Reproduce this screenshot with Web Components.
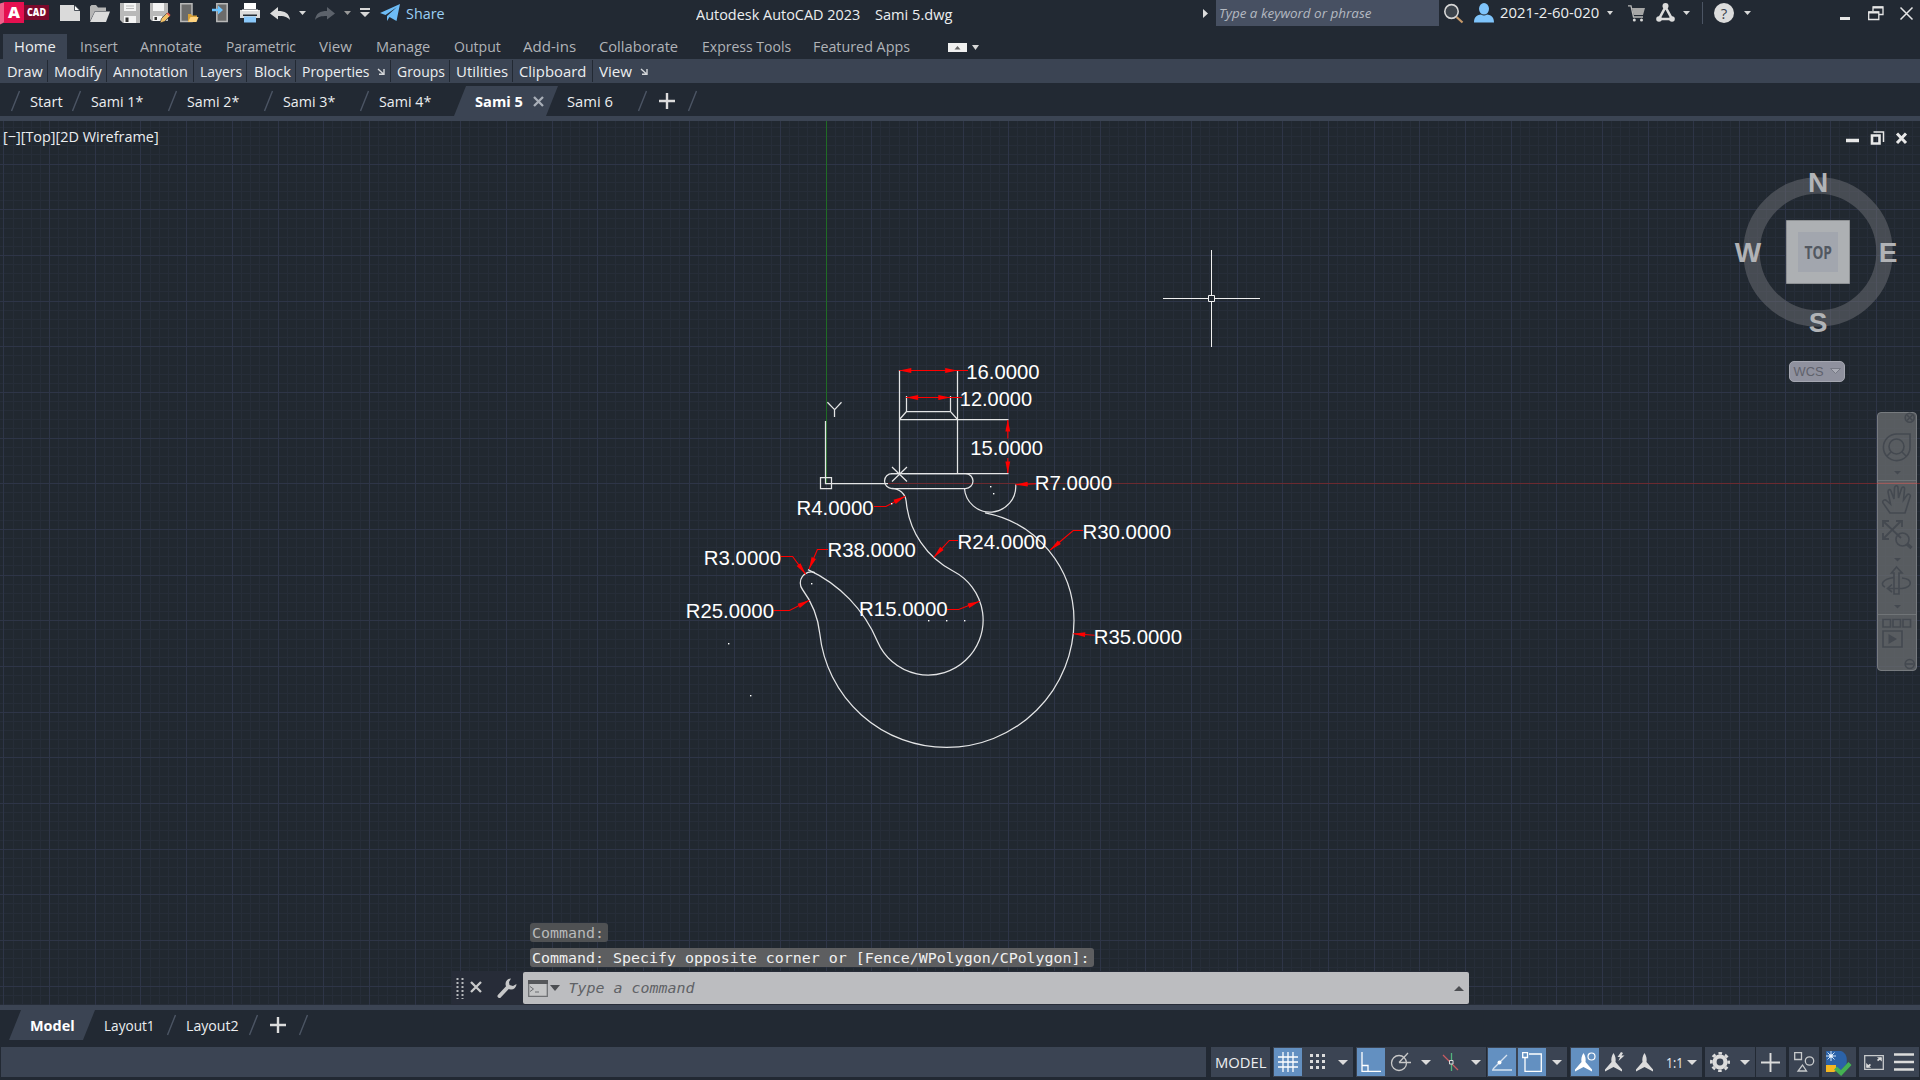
<!DOCTYPE html>
<html lang="en">
<head>
<meta charset="utf-8">
<title>Autodesk AutoCAD 2023 - Sami 5.dwg</title>
<style>
html,body{margin:0;padding:0;background:#222933}
body{width:1920px;height:1080px;overflow:hidden;font-family:"Open Sans",sans-serif}
</style>
</head>
<body>
<cad-app></cad-app>
<script>
const define = (name, css, html, after) => {
  const tpl = document.createElement('template');
  tpl.innerHTML = `<style>*{box-sizing:border-box}${css}</style>${html}`;
  customElements.define(name, class extends HTMLElement {
    connectedCallback() {
      if (this.shadowRoot) return;
      this.attachShadow({ mode: 'open' }).append(tpl.content.cloneNode(true));
      if (after) after(this, this.shadowRoot);
    }
  });
};

/* Text scaled horizontally to the width given in "w". */
define('fit-text',
  `:host{display:block;flex:none;white-space:pre;line-height:20px;height:20px;font-size:15px;color:#eceef0}
   span{display:inline-block;transform-origin:0 50%;margin-left:-.5px}`,
  `<span><slot></slot></span>`,
  (el, root) => {
    const w = +el.getAttribute('w'), s = root.querySelector('span');
    el.style.width = w + 'px';
    s.style.transform = `scaleX(${(w + 1.3) / s.offsetWidth})`;
  });

/* Lays items out left to right: each item is [start, width, markup]. */
const row = (items, from = 0) => {
  let at = from;
  return items.map(([x, w, html, style = '']) => {
    const m = x - at; at = x + w;
    return `<div class="i" style="margin-left:${m}px;width:${w}px;${style}">${html}</div>`;
  }).join('');
};
const ROW = `.i{flex:none;display:flex;align-items:center}svg{display:block;flex:none;overflow:visible}`;
const text = (t, w, st = '') => `<fit-text w="${w}" style="${st}">${t}</fit-text>`;
const svg = (w, h, body, st = '') => `<svg width="${w}" height="${h}" viewBox="0 0 ${w} ${h}" fill="none" style="${st}">${body}</svg>`;
const tri = (w = 7, h = 4, c = '#d8d8d8') => svg(w, h, `<path d="M0 0H${w}L${w / 2} ${h}Z" fill="${c}"/>`);
const slash = svg(9, 20, `<path d="M.5 20L8.5 0" stroke="#4c5564" stroke-width="1.4"/>`);
const plus = svg(16, 16, `<path d="M8 0V16M0 8H16" stroke="#dcdcdc" stroke-width="2.4"/>`);

/* ---------- title bar ---------- */
const I = {
  logo: svg(49, 26, `<path d="M22 5H49V20H22Z" fill="#7b0a2c"/><path d="M0 3.500L5 2V22L0 24.500Z" fill="#f0608b"/><path d="M4 2H24V23H4Z" fill="#e51050"/>
    <text x="8" y="18.200" font-family="Open Sans" font-weight="800" font-size="16.500" fill="#fff" textLength="12" lengthAdjust="spacingAndGlyphs">A</text>
    <text x="27" y="16" font-family="Open Sans" font-weight="800" font-size="10" fill="#fff" textLength="19" lengthAdjust="spacingAndGlyphs">CAD</text>`),
  new: svg(20, 16, `<path d="M0 0H14L20 6V16H0Z" fill="#dadada"/><path d="M14.500 0V5.500H20Z" fill="#fff" stroke="#222933" stroke-width=".8"/>`),
  open: svg(20, 17, `<path d="M0 16V1.500L1.500 0H6L8 2.500H16V6H5Z" fill="#b5b5b5"/><path d="M5 6.500H20L16 17H0Z" fill="#dcdcdc"/>`),
  save: svg(20, 20, `<path d="M0 0H20V20H3L0 17Z" fill="#b9b9b9"/><path d="M4 0H16V8H4Z" fill="#f4f4f4"/><path d="M6 3H14M6 5.500H14" stroke="#bbb"/><path d="M4 13H16V20H4Z" fill="#f4f4f4"/><path d="M5.500 14.500H8.500V19H5.500Z" fill="#333"/>`),
  saveas: svg(21, 20, `<path d="M0 0H18V18H2L0 16Z" fill="#b9b9b9"/><path d="M3 0H14V8H3Z" fill="#f4f4f4"/><path d="M3 13H12V18H3Z" fill="#f4f4f4"/><path d="M4.500 14H7V17H4.500Z" fill="#333"/><path d="M10 20L11.500 15.500L17 10L20 13L14.500 18.500Z" fill="#f3c166" stroke="#222933" stroke-width=".6"/><path d="M16.500 10.500L18 9.500L20.500 12L19.500 13.500Z" fill="#e4574c"/>`),
  web: svg(19, 20, `<path d="M.8.800H12V18.500H.8Z" fill="#6b6b6b" stroke="#b8b8b8" stroke-width="1.500"/><path d="M8 19V11H11L12 12.500H17V14.500" fill="#d69f36"/><path d="M8 19L10.500 14H18.500L16.500 19Z" fill="#ffd37f"/>`),
  phone: svg(16, 20, `<path d="M4.800.800H15.200V18.500H4.800Z" fill="#6b6b6b" stroke="#b8b8b8" stroke-width="1.500"/><path d="M0 5.800H6V2.500L11 7L6 11.500V8.300H0Z" fill="#6cc3ff"/>`),
  print: svg(20, 20, `<path d="M4 0H16V6H4Z" fill="#fff"/><path d="M0 7H20V15H0Z" fill="#dcdcdc"/><path d="M2 6.500H18V8H2Z" fill="#fff"/><path d="M3 11.500H17V13H3Z" fill="#252c35"/><path d="M4 13.500H16V19.500H4Z" fill="#8bc9fb"/>`),
  undo: svg(20, 13, `<path d="M0 6.500L8 0V4C15 4 19 6 20 13C17 9.500 14 9 8 9V12.500Z" fill="#dcdcdc"/>`),
  redo: svg(20, 13, `<path d="M20 6.500L12 0V4C5 4 1 6 0 13C3 9.500 6 9 12 9V12.500Z" fill="#5c626b"/>`),
  custom: svg(10, 9, `<path d="M0 0H10V2H0ZM0 4H10L5 9Z" fill="#d8d8d8"/>`),
  plane: svg(20, 18, `<path d="M0 9L20 0L16.500 17L9.500 13L7 17V12L17 3L5.500 11Z" fill="#6dbcf6"/>`),
  lens: svg(20, 20, `<ellipse cx="7.500" cy="7.500" rx="6.700" ry="6.900" fill="#3d444c" stroke="#d6d6d6" stroke-width="1.600"/><path d="M12.500 13L18.500 18.500" stroke="#c79a6a" stroke-width="2.200"/>`),
  user: svg(20, 20, `<ellipse cx="10" cy="5.800" rx="5" ry="5.800" fill="#7fc4fb"/><path d="M0 19.500C0 13 4 12 7 11.500Q10 13.500 13 11.500C16 12 20 13 20 19.500Z" fill="#7fc4fb"/>`),
  cart: svg(17, 17, `<path d="M0 .8H3L5.500 12H15" stroke="#b9b9b9" stroke-width="1.300"/><path d="M4 3H17L15 10H5.500Z" fill="#a6a6a6"/><circle cx="6.300" cy="15" r="1.500" fill="#d8d8d8"/><circle cx="13.500" cy="15" r="1.500" fill="#d8d8d8"/>`),
  a360: svg(19, 19, `<path d="M9.500 4L16 16H3Z" stroke="#dcdcdc" stroke-width="2.600"/><circle cx="9.500" cy="3" r="3" fill="#dcdcdc"/><circle cx="3" cy="16" r="2.800" fill="#dcdcdc"/><circle cx="16" cy="16" r="2.800" fill="#dcdcdc"/>`),
  help: svg(20, 20, `<circle cx="10" cy="10" r="10" fill="#dcdcdc"/><text x="10" y="15.500" text-anchor="middle" font-family="Open Sans" font-size="15" fill="#3a424c">?</text>`),
  restore: svg(16, 15, `<path d="M5 5V1H15V8.500H11" stroke="#e6e6e6" stroke-width="1.300"/><path d="M5 1.500H15" stroke="#e6e6e6" stroke-width="2"/><path d="M.7 6H10.800V13.500H.7Z" stroke="#e6e6e6" stroke-width="1.300"/><path d="M.5 6.500H11" stroke="#e6e6e6" stroke-width="2"/>`),
  close: svg(13, 13, `<path d="M.5.500L12.500 12.500M12.500.500L.5 12.500" stroke="#e6e6e6" stroke-width="1.500"/>`)
};
const mt = n => `margin-top:${n}px`;
define('title-bar',
  `:host{display:flex;height:34px;align-items:flex-start}${ROW}
   .search{width:223px;height:26px;background:#475062;padding-left:4px}`,
  row([
    [0, 49, I.logo], [60, 20, I.new, mt(5)], [90, 20, I.open, mt(5)], [120, 20, I.save, mt(3)], [150, 21, I.saveas, mt(3)],
    [180, 19, I.web, mt(3)], [212, 16, I.phone, mt(3)], [240, 20, I.print, mt(3)], [270, 20, I.undo, mt(7)], [299, 7, tri(), mt(11)],
    [315, 20, I.redo, mt(7)], [344, 7, tri(7, 4, '#999'), mt(11)], [360, 10, I.custom, mt(8)], [380, 20, I.plane, mt(4)],
    [406, 37, text('Share', 37, 'color:#9bcff5'), mt(3)],
    [696.4, 163.4, text('Autodesk AutoCAD 2023', 163.4), mt(4)], [876, 76.500, text('Sami 5.dwg', 76.5), mt(4)],
    [1203, 5, svg(5, 9, '<path d="M0 0L5 4.500L0 9Z" fill="#dcdcdc"/>'), mt(9)],
    [1216, 223, `<div class="search">${text('Type a keyword or phrase', 151, 'font-size:13.5px;font-style:italic;color:#b4b9c1;margin-top:2.500px')}</div>`],
    [1444, 20, I.lens, mt(4)], [1474, 20, I.user, mt(3)], [1501, 98, text('2021-2-60-020', 98, 'font-size:14.5px'), mt(3)],
    [1607, 6, tri(6, 4), mt(11)], [1628, 17, I.cart, mt(5)], [1656, 19, I.a360, mt(3)], [1683, 7, tri(), mt(11)],
    [1702, 1, '<div style="width:1px;height:22px;background:#4b5463"></div>', mt(2)], [1714, 20, I.help, mt(3)], [1744, 7, tri(), mt(11)],
    [1840, 10, '<div style="width:10px;height:3px;background:#e6e6e6"></div>', mt(17)], [1868, 16, I.restore, mt(6)], [1900, 13, I.close, mt(7)]
  ]));

/* ---------- ribbon ---------- */
const menus = [['Insert', 80.3, 36], ['Annotate', 140.7, 60.3], ['Parametric', 227, 69], ['View', 320, 32], ['Manage', 377, 53], ['Output', 454.5, 45.5],
  ['Add-ins', 524, 52], ['Collaborate', 600, 78], ['Express Tools', 702.5, 87.5], ['Featured Apps', 814, 96]];
define('ribbon-tabs',
  `:host{display:flex;height:25px;align-items:center}${ROW}.home{width:64px;height:25px;background:#3b4453;padding:2px 0 0 11.500px}`,
  row([[3, 64, `<div class="home">${text('Home', 40)}</div>`],
    ...menus.map(([t, x, w]) => [x, w, text(t, w, 'color:#b0b3b8'), 'margin-bottom:1px']),
    [948, 19, svg(19, 9, '<path d="M0 0H19V9H0Z" fill="#f0f0f0"/><path d="M6.500 6.500L9.500 3L12.500 6.500Z" fill="#666"/>'), mt(1)], [972, 7, tri(7, 5), mt(1)]]));
const launch = svg(7, 7, '<path d="M0 1L5 5.500M6 1V6.300H1" stroke="#d5d7da" stroke-width="1.400"/>');
const sep = '<div style="width:1px;height:22px;background:#222933"></div>';
const panels = [['Draw', 7.5, 34.5, 47], ['Modify', 54.5, 46.5, 106], ['Annotation', 113.5, 73.5, 193], ['Layers', 200.5, 40.5, 246], ['Block', 254, 36, 295],
  ['Properties', 302.5, 66.5, 390, 378], ['Groups', 397, 47, 449], ['Utilities', 456, 50.5, 512], ['Clipboard', 519, 66, 592], ['View', 599, 32, 0, 641]];
define('panel-bar', `:host{display:flex;height:24px;align-items:center;background:#3b4453}${ROW}`,
  row(panels.flatMap(([t, x, w, s, l]) => [[x, w, text(t, w)], ...(l ? [[l, 7, launch]] : []), ...(s ? [[s, 1, sep]] : [])])));

/* ---------- file tabs ---------- */
define('file-tabs',
  `:host{display:flex;height:38px;align-items:center;border-bottom:5px solid #3b4453;padding-top:3px}${ROW}
   .on{width:104px;height:30px;background:#3b4453;clip-path:polygon(12px 0,104px 0,92px 100%,0 100%);display:flex;align-items:center;padding-left:21px;gap:11px}`,
  row([[11, 9, slash], [30, 31, text('Start', 31)], [72, 9, slash], [91, 51, text('Sami 1*', 51)], [168, 9, slash], [187, 51, text('Sami 2*', 51)],
    [264, 9, slash], [283, 51, text('Sami 3*', 51)], [360, 9, slash], [379, 51, text('Sami 4*', 51)],
    [454, 104, `<div class="on">${text('Sami 5', 46.5, 'font-weight:700;color:#fff')}${svg(11, 11, '<path d="M1 1L10 10M10 1L1 10" stroke="#a9afb8" stroke-width="2.300"/>')}</div>`],
    [567, 45, text('Sami 6', 45)], [638, 9, slash], [659, 16, plus], [688, 9, slash]]));

/* ---------- drawing ---------- */
const grid = (() => {
  let minor = '', major = '';
  for (let k = -1; k < 43 * 5; k++) {
    const x = Math.floor(3.98 + 45.67 * k / 5) + .5, s = `M${x} 0V884`;
    if (k % 5) minor += s; else major += s;
  }
  for (let k = -5; k < 95; k++) {
    const y = Math.floor(164.1 + 45.67 * k / 5) - 120.5; if (y < 0) continue;
    const s = `M0 ${y}H1920`;
    if (k % 5) minor += s; else major += s;
  }
  return `<path d="${minor}" stroke="#262d38"/><path d="${major}" stroke="#2e3547"/>`;
})();
const arrow = (x, y, fx, fy) => {
  const d = Math.hypot(fx - x, fy - y), u = (fx - x) / d, v = (fy - y) / d, bx = x + u * 12, by = y + v * 12;
  return `<path d="M${x} ${y}L${bx - v * 2.4} ${by + u * 2.4}L${bx + v * 2.4} ${by - u * 2.4}Z" fill="#f00"/>`;
};
const leader = pts => arrow(...pts[0], ...pts[1]) + `<polyline points="${pts.join(' ')}" stroke="#f00" stroke-width="1.100"/>`;
const dim = (t, x, y, w) => `<text x="${x - 1.2}" y="${y}" textLength="${w + 2.2}" lengthAdjust="spacingAndGlyphs">${t}</text>`;
const dot = (x, y) => `<rect x="${Math.floor(x)}" y="${Math.floor(y)}" width="1.400" height="1.400" fill="#fff"/>`;
define('cad-drawing', `:host{display:block;height:884px}svg{display:block}text{font:20.6px "Liberation Sans",sans-serif;fill:#fff}`,
  `<svg width="1920" height="884" viewBox="0 0 1920 884" fill="none">${grid}
  <g transform="translate(0,-121)">
  <path d="M826.5 121V483" stroke="#1f6b24"/><path d="M888 483.500H1920" stroke="#6b2a30"/>
  <g stroke="#e4e5e6" stroke-width="1.250">
    <path d="M899.5 370V473M957.500 370V473M906.500 396V411.500M950.500 396V411.500M906.500 411.500H950.500L957.500 419.500M906.500 411.500L899.500 419.500M899.500 419.500H1008.500M891 473.500H1008.500"/>
    <rect x="884.500" y="473.500" width="88.500" height="15" rx="7.500"/>
    <path d="M891.8 488.300A14.500 14.500 0 0 1 906.200 501.400A87.100 87.100 0 0 0 953.400 571.200A55 55 0 1 1 877.600 641.800A138 138 0 0 0 808 569.600"/>
    <path d="M815 572.700A10.900 10.900 0 0 0 802.500 589.500A90.700 90.700 0 0 1 819.800 633.800A127.300 127.300 0 0 0 946.700 747.400A127.300 127.300 0 0 0 1074 620.400A109.600 109.600 0 0 0 985.100 512.800"/>
    <path d="M964.400 488.300A25.600 25.600 0 0 0 1015.700 484.500"/>
    <path d="M825.500 421V483.500H888M820.500 477.500H831.500V488.500H820.500ZM827.400 402.300L834.600 409.700L841.500 402.300M834.500 409.700V417M892 467L907 481.500M907 467L892 481.500"/>
  </g>
  ${arrow(899.3, 370.5, 910, 370.5)}${arrow(957.2, 370.5, 940, 370.5)}${arrow(906.2, 397.5, 920, 397.5)}${arrow(950.3, 397.5, 940, 397.5)}${arrow(1007.8, 419.5, 1007.8, 440)}${arrow(1007.8, 473.5, 1007.8, 460)}
  <path d="M899.300 370.500H968M906 397.500H962M1007.800 420V438.500M1007.800 458V473" stroke="#f00" stroke-width="1.100"/>
  ${[[[1050.2, 550], [1073.2, 530.5], [1083, 530.5]], [[933.8, 557.3], [949.3, 540.5], [958, 540.5]], [[809.1, 569], [817.4, 549.5], [828, 549.5]],
    [[805.7, 574.3], [792.6, 556.5], [780.5, 556.5]], [[809.4, 600.3], [789.5, 610.5], [773, 610.5]], [[979.6, 601.3], [958.6, 609.5], [947, 609.5]],
    [[1073.2, 633.7], [1094.6, 635.3]], [[1015.7, 484.7], [1036, 483.7]], [[905.2, 496.3], [885.9, 506.5], [874, 506.5]]].map(leader).join('')}
  ${dim('16.0000', 967.5, 379, 71)}${dim('12.0000', 961, 405.7, 70)}${dim('15.0000', 971.5, 455, 70.5)}${dim('R7.0000', 1036, 489.7, 75)}${dim('R30.0000', 1083.7, 539, 86.3)}${dim('R24.0000', 958.8, 548.7, 86.5)}
  ${dim('R38.0000', 828.8, 556.7, 86)}${dim('R3.0000', 705, 564.7, 75)}${dim('R25.0000', 687, 617.7, 86)}${dim('R15.0000', 860.2, 615.7, 86.5)}${dim('R35.0000', 1095, 643.7, 86)}${dim('R4.0000', 797.7, 514.7, 75)}
  ${[[990, 486.5], [993, 493], [811, 583], [928, 620], [946, 620], [964, 620], [728, 643], [750, 695], [891, 503]].map(p => dot(...p)).join('')}
  <path d="M1211.500 250V295M1211.500 302V347M1163 298.500H1208M1215 298.500H1260M1208.500 295.500H1214.500V301.500H1208.500Z" stroke="#f0f0f0"/>
  </g></svg>`);

/* ---------- view cube ---------- */
define('view-cube', `:host{display:block}svg{display:block}text{font:bold 28px "Liberation Sans",sans-serif;fill:#b1b3b6}`,
  `<svg width="170" height="230" viewBox="1733 152 170 230" fill="none">
   <circle cx="1818" cy="252" r="66.500" stroke="#6d7075" stroke-opacity=".5" stroke-width="16.500"/>
   <text x="1818" y="192" text-anchor="middle">N</text><text x="1818" y="332" text-anchor="middle">S</text><text x="1748" y="262" text-anchor="middle">W</text><text x="1888" y="262" text-anchor="middle">E</text>
   <path d="M1786.500 220.500H1849.500V283.500H1786.500Z" fill="#adb0b3" stroke="#8d9093"/><path d="M1798 232H1838V272H1798Z" fill="#a2a6ae"/>
   <text x="1804.500" y="258.500" style="font:700 18px 'Open Sans';fill:#525861" textLength="27.500" lengthAdjust="spacingAndGlyphs">TOP</text>
   <rect x="1789.500" y="361.500" width="55" height="20" rx="4.500" fill="#8f919e" stroke="#a5a7b1"/>
   <text x="1793.500" y="375.700" style="font:13px 'Liberation Sans';fill:#5f626c" textLength="30" lengthAdjust="spacingAndGlyphs">WCS</text>
   <path d="M1830.500 368.500H1840.500L1835.500 373.500Z" fill="#a9abb5" stroke="#777a85"/></svg>`);

/* ---------- navigation bar ---------- */
define('nav-bar', `:host{display:block}svg{display:block}`,
  `<svg width="40" height="259" viewBox="0 0 40 259" fill="none" stroke="#444950" stroke-width="1.600">
   <rect x=".5" y=".5" width="39" height="258" rx="3.500" fill="#6d7073" fill-opacity=".72" stroke="#777b7f" stroke-width="1"/>
   <circle cx="32.700" cy="5.700" r="4.500"/><path d="M30 3L35.500 8.500M35.500 3L30 8.500"/>
   <path d="M20 22H33V35A13.300 13.300 0 1 1 20 22Z"/><circle cx="19.500" cy="34.500" r="7.500"/><path d="M14 40L10 44M25 40L29 44"/>
   <path d="M17 59H24L20.500 62.500Z" fill="#444950" stroke="none"/>
   <path d="M1 68.500H39" stroke="#707477" stroke-width="1"/><path d="M0 71.300H40" stroke="#a85d5c" stroke-width="1"/>
   <path d="M13 101L6 91C5 88 8 87 10 89L13.500 92L11 80C11 77 13.500 77 14 79L17 87L17.500 76C18 73 21 73 21 76L21.500 86L24.500 76.500C25.500 74 28 75 27.500 77.500L26.500 88L30 83C32 81 34 83 33 85L28 101Z"/>
   <path d="M7 110L24 126M24 109L7 126M6 115V109H12M19 109H25V115M6 121V127H12" stroke-width="1.800"/><circle cx="25.500" cy="127.500" r="6.500"/><path d="M30 132L34.500 136" stroke-width="3.200"/>
   <path d="M17 146H24L20.500 149.500Z" fill="#444950" stroke="none"/>
   <path d="M17 182V161H14.500L19.500 155L25 161H22V182Z"/><path d="M25 166C36 167 36 175 25 176.500H12M17 165.500C5 167 3 173 8 175M15 172.500L10.500 176.500L15 180"/>
   <path d="M17 193H24L20.500 196.500Z" fill="#444950" stroke="none"/><path d="M1 202.500H39" stroke="#707477" stroke-width="1"/>
   <path d="M6 207.500H13.500V215H6ZM16 207.500H23.500V215H16ZM26 207.500H33.500V215H26ZM6 219H25V235H6Z"/><path d="M11.500 222V232L20 227Z" fill="#444950" stroke="none"/>
   <circle cx="32.700" cy="252" r="4.500"/><path d="M29 252H36"/></svg>`);

/* ---------- command line ---------- */
define('command-line',
  `:host{display:block;font:14.95px "DejaVu Sans Mono",monospace}
   .h{margin-left:78px;width:max-content;height:19px;line-height:20px;background:#5d5e60;border-radius:3px;color:#f0f0f0;padding:0 4px 0 2px;white-space:pre}
   .h.a{color:#b9babb;background:#4f5153;margin-bottom:6px}.bar{margin-top:4px;display:flex;height:34px;align-items:center;background:#272c38;width:1017px}
   svg{flex:none;display:block}.in{margin-left:5.500px;flex:1;height:32px;background:#bcbdc0;border-radius:2px;display:flex;align-items:center;padding:0 5px}
   .in i{margin-left:9px;flex:1;color:#606266}`,
  `<div class="h a">Command:</div><div class="h">Command: Specify opposite corner or [Fence/WPolygon/CPolygon]:</div>
   <div class="bar">${svg(8, 22, '<path d="M1.500 1V22M6.500 1V22" stroke="#b8babd" stroke-width="2" stroke-dasharray="2 2"/>', 'margin-left:4px')}
   ${svg(12, 12, '<path d="M1 1L11 11M11 1L1 11" stroke="#c9cacb" stroke-width="2.300"/>', 'margin:0 15px 2px 6px')}
   ${svg(20, 20, '<path d="M2.500 18L11 9" stroke="#c6c7c8" stroke-width="4" stroke-linecap="round"/><path d="M14 .5A5.500 5.500 0 1 0 19.500 6L16 8L12.500 7L12 4Z" fill="#c6c7c8"/>')}
   <div class="in">${svg(20, 17, '<path d="M.7.700H19.300V16.300H.7Z" fill="#c4c5c6" stroke="#6f7174" stroke-width="1.300"/><path d="M0 0H20V4H0Z" fill="#55575a"/><path d="M2 6.500L5.500 9L2 11.500M7 12H11" stroke="#6b6d70"/>')}
   ${svg(10, 6, '<path d="M0 0H10L5 6Z" fill="#4c4e52"/>', 'margin-left:2px')}<i>Type a command</i>${svg(10, 5, '<path d="M0 5H10L5 0Z" fill="#4c4e52"/>')}</div></div>`);

define('window-buttons', `:host{display:block}svg{display:block}`,
  svg(64, 15, `<path d="M1 9.500H14" stroke="#e8e8e8" stroke-width="3.500"/><path d="M27 4.500H34.500V12.500H27Z" stroke="#e8e8e8" stroke-width="2.600"/><path d="M28.500 1H38.500V11" stroke="#e8e8e8" stroke-width="1.500"/><path d="M52 2.500L61 12M61 2.500L52 12" stroke="#e8e8e8" stroke-width="3"/>`));

define('model-viewport',
  `:host{display:block;position:relative;height:884px;background:#212830;overflow:hidden}:host>*{position:absolute}
   .label{left:3px;top:5px}.btn{left:1845px;top:10px}.cube{left:1733px;top:31px}.nav{left:1877px;top:291px}.cmd{left:452px;top:802px}`,
  `<cad-drawing></cad-drawing><fit-text class="label" w="154.500">[−][Top][2D Wireframe]</fit-text>
   <window-buttons class="btn"></window-buttons><view-cube class="cube"></view-cube><nav-bar class="nav"></nav-bar><command-line class="cmd"></command-line>`);

/* ---------- layout tabs ---------- */
define('layout-tabs',
  `:host{display:flex;height:42px;align-items:center;border-top:5px solid #3b4453;padding-bottom:7px}${ROW}
   .on{width:86px;height:30px;background:#3b4453;clip-path:polygon(12px 0,86px 0,74px 100%,0 100%);display:flex;align-items:center;padding-left:21.500px}`,
  row([[9, 86, `<div class="on">${text('Model', 43, 'font-weight:700;color:#fff')}</div>`], [104.500, 49.500, text('Layout1', 49.5)], [167, 9, slash],
    [186.500, 51.500, text('Layout2', 51.5)], [249, 9, slash], [270, 16, plus], [299, 9, slash]]));

/* ---------- status bar ---------- */
const on = b => `<div class="on">${b}</div>`, dn = tri(10, 5, '#dcdcdc');
const person = '<path d="M8.500 0C10.500 3 11 6 10.500 9L17 16.500V18.500L8.500 14L0 18.500V16.500L6.500 9C6 6 6.500 3 8.500 0Z" fill="#dcdcdc"/>';
const S = {
  grid: svg(20, 20, '<path d="M5 0V20M10 0V20M15 0V20M0 5H20M0 10H20M0 15H20" stroke="#fff" stroke-width="1.300"/>'),
  snap: svg(16, 16, [0, 6, 12].map(x => [0, 6, 12].map(y => `<rect x="${x}" y="${y}" width="3" height="3" fill="#dcdcdc"/>`).join('')).join('')),
  ortho: svg(20, 20, '<path d="M1 0V19.300H20M1 13.500H7V19" stroke="#fff" stroke-width="1.300"/>'),
  polar: svg(20, 20, '<circle cx="8" cy="11" r="7.500" stroke="#c8c8c8" stroke-width="1.300"/><path d="M8 10.500H20M8 10.500L17 1" stroke="#c8c8c8" stroke-width="1.300"/>'),
  iso: svg(17, 19, '<path d="M0 2L15 17" stroke="#c75b62" stroke-width="1.300"/><path d="M8.500 0V18" stroke="#52b37c" stroke-width="1.300"/><path d="M6.500 7.500H10V11H6.500Z" fill="#3b4453" stroke="#ddd"/>'),
  track: svg(20, 18, '<path d="M0 17H20M1 16L15 2" stroke="#d6e2ef" stroke-width="1.400"/><circle cx="7.500" cy="9.500" r="2" fill="#fff"/>'),
  osnap: svg(20, 20, '<path d="M3 6V19.300H19.300V2H7M.7.700H5.500V5.500H.7Z" stroke="#fff" stroke-width="1.300"/>'),
  ann1: svg(21, 21, `<g transform="translate(0,1)">${person.replace('#dcdcdc', '#fff')}</g><circle cx="16.500" cy="4.500" r="3.500" stroke="#fff" stroke-width="1.200"/>`),
  ann2: svg(20, 20, `<g transform="translate(0,1)">${person}</g><path d="M16 0L12.500 5H15L13.500 9L19.500 3.500H16.500L18 1Z" fill="#dcdcdc"/>`),
  ann3: svg(17, 19, person),
  gear: svg(20, 20, '<circle cx="10" cy="10" r="5.500" stroke="#dcdcdc" stroke-width="4.200"/><circle cx="10" cy="10" r="8.700" stroke="#dcdcdc" stroke-width="2.600" stroke-dasharray="3.600 3.233" stroke-dashoffset="1.800"/>'),
  add: svg(19, 19, '<path d="M9.500 0V19M0 9.500H19" stroke="#dcdcdc" stroke-width="1.900"/>'),
  shapes: svg(20, 20, '<path d="M.7.700H7.500V7.500H.7ZM8.500 13L12.500 19H4Z" stroke="#c8cacc" stroke-width="1.300"/><circle cx="15.500" cy="9" r="4.200" stroke="#c8cacc" stroke-width="1.300"/>'),
  globe: svg(25, 25, '<path d="M0 1H15C20 3 21.500 7 20.500 14L15 20H4L0 14Z" fill="#2b62a8"/><path d="M0 6H10M5 1V11M1.500 2.500L8.500 9.500M8.500 2.500L1.500 9.500" stroke="#cfe2f5" stroke-width="1"/><circle cx="5" cy="6" r="1.800" fill="#eef6ff"/><path d="M0 15H10V21L8 22H0Z" fill="#f4b721"/><path d="M9.500 18L15 23L24 13.500" stroke="#44b152" stroke-width="4.200"/>'),
  full: svg(20, 15, '<path d="M.7.700H19.300V14.300H.7Z" stroke="#c8cacc" stroke-width="1.300"/><path d="M13.500 5.500L17 3M3 12L6.500 9.500" stroke="#dcdcdc" stroke-width="1.600"/><path d="M13 2.300H17.800V6.500ZM2.200 8V12.800H7Z" fill="#dcdcdc"/>'),
  menu: svg(20, 18, '<path d="M0 1.500H20M0 9H20M0 16.500H20" stroke="#dcdcdc" stroke-width="2.300"/>')
};
const group = (x, w, items) => [x, w, row(items, x), 'height:30px;background:#3b4453'];
define('status-bar', `:host{display:flex;height:30px}${ROW}.on{width:28px;height:28px;background:#6390c1;display:flex;align-items:center;justify-content:center}`,
  row([group(1, 1205, []), group(1211, 59, [[1215.5, 50, text('MODEL', 50)]]),
    group(1273, 80, [[1274, 28, on(S.grid)], [1310, 16, S.snap], [1338, 10, dn]]),
    group(1356, 130, [[1357, 28, on(S.ortho)], [1391, 20, S.polar], [1421, 10, dn], [1443, 17, S.iso], [1471, 10, dn]]),
    group(1487, 80, [[1488, 28, on(S.track)], [1518, 28, on(S.osnap)], [1552, 10, dn]]),
    group(1570, 132, [[1571, 28, on(S.ann1)], [1605, 20, S.ann2], [1636, 17, S.ann3], [1666, 16, text('1:1', 16)], [1687, 10, dn]]),
    group(1705, 50, [[1710, 20, S.gear], [1740, 10, dn]]), group(1756, 30, [[1761, 19, S.add]]), group(1789, 30, [[1794, 20, S.shapes]]),
    group(1822, 34, [[1826, 25, S.globe]]), group(1859, 60, [[1864, 20, S.full], [1894, 20, S.menu]])]));

define('cad-app', `:host{display:flex;flex-direction:column;width:1920px;height:1080px;background:#222933}:host>*{flex:none}`,
  `<title-bar></title-bar><ribbon-tabs></ribbon-tabs><panel-bar></panel-bar><file-tabs></file-tabs><model-viewport></model-viewport><layout-tabs></layout-tabs><status-bar></status-bar>`);
</script>
</body>
</html>
